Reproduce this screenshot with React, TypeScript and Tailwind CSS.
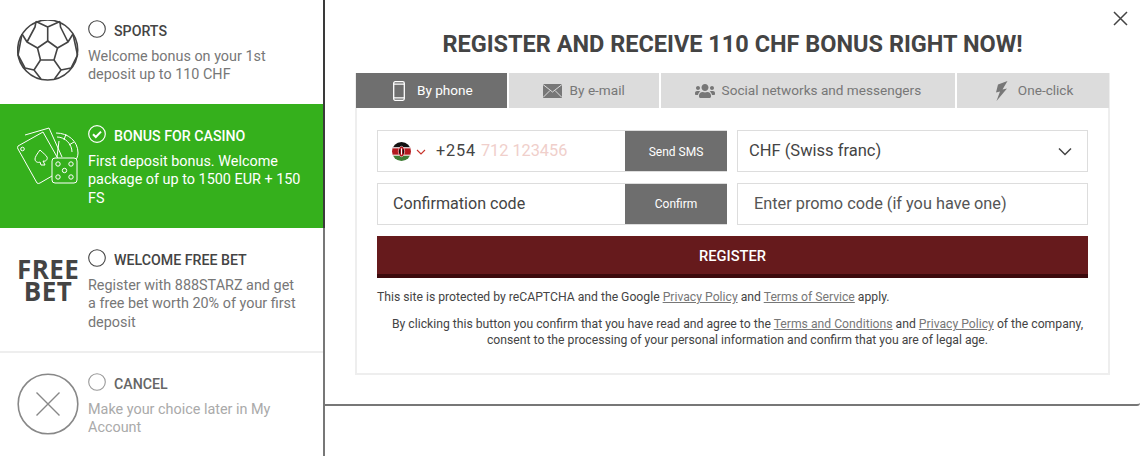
import type { ReactNode } from "react";
import { FaUsers } from "react-icons/fa";

const ff = "font-['Roboto',sans-serif]";

function Radio({ checked, muted }: { checked?: boolean; muted?: boolean }) {
  if (checked) {
    return (
      <svg width="18" height="18" viewBox="0 0 18 18" className="shrink-0">
        <circle cx="9" cy="9" r="8.3" fill="none" stroke="#fff" strokeWidth="1.2" />
        <path d="M5 9.2l2.8 2.8L13 6.6" fill="none" stroke="#fff" strokeWidth="2" />
      </svg>
    );
  }
  return (
    <svg width="18" height="18" viewBox="0 0 18 18" className="shrink-0">
      <circle cx="9" cy="9" r="8.3" fill="none" stroke={muted ? "#999" : "#444"} strokeWidth="1.1" />
    </svg>
  );
}

function BallIcon() {
  return (
    <svg width="62" height="62" viewBox="17 20 62 62" fill="none" stroke="#444" strokeWidth="1.6" strokeLinejoin="round">
      <circle cx="47.7" cy="50" r="30" />
      <path d="M47.7 41L57.5 48L54 60H40.5L37.5 48Z" />
      <path d="M47.7 41V27L36 21.5M47.7 27L60 21.5M57.5 48L68 42L60.5 27L60 21.5M68 42L73 34M37.5 48L27 42L35 27L36 21.5M27 42L22 34" />
      <path d="M54 60L61 70L54.5 79M40.5 60L34 70L41 79M61 70L71 68L77.5 55L73 34M34 70L25 68L18 55L22 34" />
    </svg>
  );
}

function CasinoIcon() {
  return (
    <svg width="62" height="60" viewBox="17 125 62 60" fill="none" stroke="#fff" strokeWidth="1" strokeLinejoin="round">
      <path d="M25 135L49 128L62 157" />
      <path d="M18 146L43 132L61 164L52 169" />
      <path d="M18 146Q17 148 18 149L37 183Q38 184 40 183L52 176" />
      <circle cx="22.5" cy="149" r="1.8" />
      <path d="M40 150C37 154 35 157 35 159C35 162 38 163 40 162L41 165H45L43 161C46 162 48 159 47 157C46 155 43 153 40 150Z" />
      <path d="M56 133C68 133 78 141 78 153C78 157 76 160 75 161M57 137C65 137 72 144 72 152M59 141L57 157M66 134L64 140M74 142L69 145" />
      <rect x="52" y="158" width="25" height="25" rx="3" fill="#35b01c" />
      <circle cx="58" cy="164" r="2.2" />
      <circle cx="71" cy="164" r="2.2" />
      <circle cx="64.5" cy="170.5" r="2.2" />
      <circle cx="58" cy="177" r="2.2" />
      <circle cx="71" cy="177" r="2.2" />
    </svg>
  );
}

function FreeBetIcon() {
  return (
    <div className="w-[62px] text-center font-['Open_Sans',sans-serif] text-[26px] leading-[22px] font-bold tracking-[0.4px] text-[#444]">
      FREE
      <br />
      BET
    </div>
  );
}

function CancelIcon() {
  return (
    <svg width="62" height="62" viewBox="0 0 62 62" fill="none" stroke="#888" strokeWidth="1.6">
      <circle cx="31" cy="31" r="29.8" />
      <path d="M19.5 19.5L42.5 42.5M42.5 19.5L19.5 42.5" strokeWidth="1.4" />
    </svg>
  );
}

function BonusRow({
  icon,
  title,
  text,
  height,
  checked,
  muted,
  active,
  iconClass,
  pad,
}: {
  icon: ReactNode;
  title: string;
  text: string;
  height: string;
  checked?: boolean;
  muted?: boolean;
  active?: boolean;
  iconClass: string;
  pad: string;
}) {
  return (
    <div className={`flex pl-[17px] pr-[22px] ${height} ${pad} ${active ? "bg-[#35b01c] text-white" : "bg-white"}`}>
      <div className={`w-[71px] shrink-0 ${iconClass}`}>{icon}</div>
      <div>
        <div className="flex items-start gap-2">
          <Radio checked={checked} muted={muted} />
          <span className={`mt-[2px] text-[14.2px] leading-[18px] font-medium ${active ? "text-white" : muted ? "text-[#666]" : "text-[#444]"}`}>{title}</span>
        </div>
        <p className={`mt-[7.5px] text-[14.4px] leading-[18.5px] ${active ? "text-white" : muted ? "text-[#aaa]" : "text-[#777]"}`}>{text}</p>
      </div>
    </div>
  );
}

function Tab({ icon, label, width, gap, active }: { icon: ReactNode; label: string; width: string; gap: string; active?: boolean }) {
  return (
    <div className={`flex h-[35px] items-center justify-center text-[13.6px] ${width} ${gap} ${active ? "bg-[#6f6f6f] text-white" : "bg-[#dcdcdc] text-[#777]"}`}>
      {icon}
      <span>{label}</span>
    </div>
  );
}

function KenyaFlag() {
  return (
    <svg width="19" height="19" viewBox="0 0 18 18" className="shrink-0">
      <clipPath id="flagClip">
        <circle cx="9" cy="9" r="9" />
      </clipPath>
      <g clipPath="url(#flagClip)">
        <rect width="18" height="5.5" fill="#111" />
        <rect y="5.5" width="18" height="7" fill="#b3191f" />
        <rect y="5" width="18" height="1" fill="#fff" />
        <rect y="12" width="18" height="1" fill="#fff" />
        <rect y="13" width="18" height="5" fill="#3f7d34" />
        <ellipse cx="9" cy="9" rx="3" ry="5" fill="#b3191f" stroke="#fff" strokeWidth="0.5" />
        <rect x="8.5" y="6" width="1" height="6" fill="#fff" />
        <rect x="6.6" y="7" width="1.2" height="4" fill="#111" />
        <rect x="10.2" y="7" width="1.2" height="4" fill="#111" />
      </g>
    </svg>
  );
}

export default function App() {
  return (
    <div className={`flex h-[456px] w-[1140px] overflow-hidden bg-white ${ff}`}>
      <aside className="relative w-[325px] shrink-0 pr-[2px]">
        <div className="absolute inset-y-0 right-0 w-[2px] bg-[linear-gradient(#3a3a3a_0,#3a3a3a_228px,#777_228px)]" />
        <BonusRow icon={<BallIcon />} title="SPORTS" text="Welcome bonus on your 1st deposit up to 110 CHF" height="h-[104px]" pad="pt-[20px]" iconClass="" />
        <BonusRow icon={<CasinoIcon />} title="BONUS FOR CASINO" text="First deposit bonus. Welcome package of up to 1500 EUR + 150 FS" height="h-[124px]" pad="pt-[21px]" iconClass="" checked active />
        <BonusRow icon={<FreeBetIcon />} title="WELCOME FREE BET" text="Register with 888STARZ and get a free bet worth 20% of your first deposit" height="h-[125px] border-b-2 border-[#eee]" pad="pt-[21px]" iconClass="pt-[9px]" />
        <BonusRow icon={<CancelIcon />} title="CANCEL" text="Make your choice later in My Account" height="h-[103px]" pad="pt-[20px]" iconClass="" muted />
      </aside>

      <main className="relative h-[406px] flex-1 rounded-br-[3px] border-b-2 border-[#777] px-[30px] pt-[30px]">
        <button className="absolute top-[11px] right-[12px] text-[#444]">
          <svg width="15" height="15" viewBox="0 0 15 15" fill="none" stroke="#444" strokeWidth="1.5">
            <path d="M1 1L14 14M14 1L1 14" />
          </svg>
        </button>
        <h1 className="text-center text-[23.5px] leading-[28px] font-bold text-[#444]">REGISTER AND RECEIVE 110 CHF BONUS RIGHT NOW!</h1>

        <div className="mt-[15px] h-[302px] w-[755px] border-2 border-t-0 border-[#eee]">
          <div className="-mx-[1px] flex gap-[2px]">
            <Tab
              width="w-[151px] pl-[3px]"
              gap="gap-[12px]"
              active
              label="By phone"
              icon={
                <svg width="12" height="20" viewBox="0 0 12 20" fill="none" stroke="#fff" strokeWidth="1.3">
                  <rect x="0.7" y="0.7" width="10.6" height="18.6" rx="1.5" />
                  <path d="M0.7 3.2H11.3M0.7 16.8H11.3" />
                </svg>
              }
            />
            <Tab
              width="w-[150px]"
              gap="gap-[8px]"
              label="By e-mail"
              icon={
                <svg width="19" height="14" viewBox="0 0 19 14">
                  <rect width="19" height="14" fill="#777" />
                  <path d="M0 0.5L9.5 8L19 0.5M0 13.5L7 6.5M19 13.5L12 6.5" fill="none" stroke="#dcdcdc" strokeWidth="1" />
                </svg>
              }
            />
            <Tab width="w-[295px]" gap="gap-[7px]" label="Social networks and messengers" icon={<FaUsers size={20} color="#777" />} />
            <Tab
              width="w-[152px] pl-[2px]"
              gap="gap-[10px]"
              label="One-click"
              icon={
                <svg width="13" height="20" viewBox="0 0 13 20" fill="#777">
                  <path d="M12.5 0L3 3.5L1 11.5L5 10.5L1.5 20L12 7.5L7.5 8.5Z" />
                </svg>
              }
            />
          </div>

          <div className="grid grid-cols-[350px_351px] gap-x-[10px] gap-y-[11px] pt-[22px] pl-[20px]">
            <div className="flex h-[42px] border border-r-0 border-[#ddd]">
              <div className="flex flex-1 items-center pt-[1px] pl-[14px] text-[16.3px]">
                <KenyaFlag />
                <svg width="10" height="6" viewBox="0 0 10 6" fill="none" stroke="#c8342c" strokeWidth="1.1" className="mx-[5px] mt-[1px]">
                  <path d="M1 1L5 5L9 1" />
                </svg>
                <span className="ml-[5px] tracking-[0.8px] text-[#444]">+254</span>
                <span className="ml-[5px] text-[#f0cfcb]">712 123456</span>
              </div>
              <button className="w-[102px] bg-[#6e6e6e] pt-[1px] text-[12px] text-white">Send SMS</button>
            </div>
            <div className="flex h-[42px] items-center justify-between border border-[#ddd] pt-[1px] pr-[15px] pl-[11px] text-[16.5px] text-[#444]">
              <span>CHF (Swiss franc)</span>
              <svg width="14" height="9" viewBox="0 0 14 9" fill="none" stroke="#444" strokeWidth="1.5">
                <path d="M1 1.5L7 7.5L13 1.5" />
              </svg>
            </div>
            <div className="flex h-[42px] border border-r-0 border-[#ddd]">
              <div className="flex flex-1 items-center pl-[15px] text-[16.1px] text-[#444]">Confirmation code</div>
              <button className="w-[102px] bg-[#6e6e6e] text-[12px] text-white">Confirm</button>
            </div>
            <div className="flex h-[42px] items-center border border-[#ddd] pl-[16px] text-[16.3px] text-[#555]">Enter promo code (if you have one)</div>
            <button className="col-span-2 h-[42px] w-[711px] border-b-[4px] border-[#3c0a0c] bg-[#661a1c] pt-[3px] text-[14.7px] font-medium text-white">REGISTER</button>
          </div>

          <p className="mt-[11px] pl-[20px] text-[12.2px] leading-[16px] text-[#444]">
            This site is protected by reCAPTCHA and the Google <a className="text-[#777] underline">Privacy Policy</a> and <a className="text-[#777] underline">Terms of Service</a> apply.
          </p>
          <p className="mt-[11px] pr-[22px] pl-[32px] text-center text-[12.2px] leading-[16px] text-[#444]">
            By clicking this button you confirm that you have read and agree to the <a className="text-[#777] underline">Terms and Conditions</a> and <a className="text-[#777] underline">Privacy Policy</a> of the company, consent to the processing of your personal information and confirm that you are of legal age.
          </p>
        </div>
      </main>
    </div>
  );
}
